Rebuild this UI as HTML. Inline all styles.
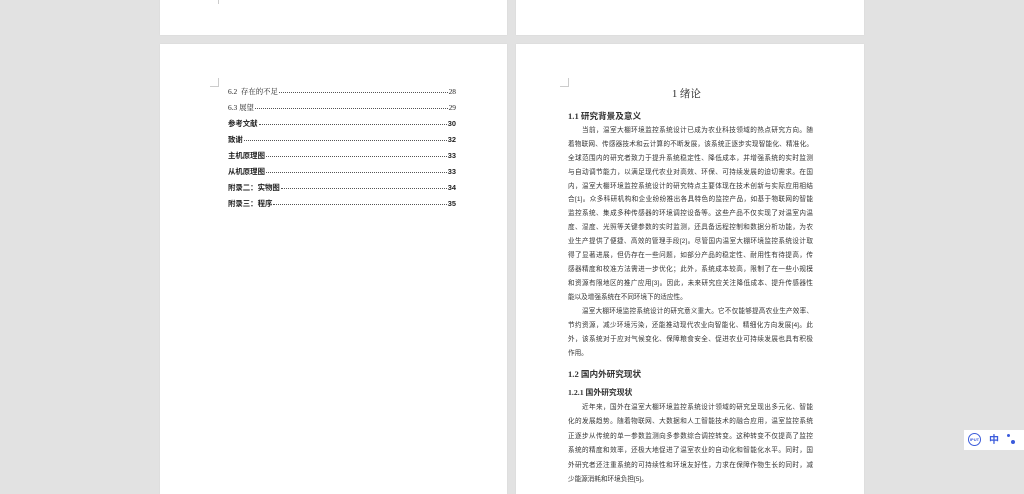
<!DOCTYPE html>
<html><head><meta charset="utf-8"><style>
body{margin:0;width:1024px;height:483px;background:#e2e2e2;position:relative;overflow:hidden;font-family:"Liberation Serif","Noto Serif CJK SC","Noto Sans CJK SC",serif;color:#222}
.pg{position:absolute;background:#fff;box-shadow:0 0 1px #cfcfcf}
.l{position:absolute;white-space:nowrap}
.h{font-family:"Liberation Serif","Noto Sans CJK SC",sans-serif;font-weight:bold;color:#333}
.toc{position:absolute;left:228px;width:228px;font-size:7.4px;display:flex;align-items:baseline}
.toc .d{flex:1;border-bottom:1px dotted #555;margin:0 1px;transform:translateY(-1px)}
.b{font-family:"Liberation Sans","Noto Sans CJK SC",sans-serif;font-weight:bold}
.tx{position:absolute;left:568px;width:245px;font-size:6.6px;text-align:justify;text-align-last:justify;white-space:nowrap;line-height:8px;font-family:"Liberation Sans","Noto Sans CJK SC",sans-serif;color:#333}
.cm{position:absolute;border-color:#ccc;border-style:solid;width:8px;height:8px}
</style></head><body>
<div class="pg" style="left:160px;top:-5px;width:347px;height:40px"></div>
<div class="pg" style="left:516px;top:-5px;width:348px;height:40px"></div>
<div class="pg" style="left:160px;top:44px;width:347px;height:450px"></div>
<div class="pg" style="left:516px;top:44px;width:348px;height:450px"></div>
<div class="cm" style="left:210px;top:78px;border-width:0 1px 1px 0"></div>
<div class="cm" style="left:210px;top:-4px;border-width:0 1px 0 0"></div>
<div class="cm" style="left:560px;top:78px;border-width:0 1px 1px 0"></div>

<div class="toc" style="top:86px"><span>6.2&nbsp; 存在的不足</span><span class="d"></span><span>28</span></div>
<div class="toc" style="top:102px"><span>6.3 展望</span><span class="d"></span><span>29</span></div>
<div class="toc b" style="top:118px"><span>参考文献</span><span class="d"></span><span>30</span></div>
<div class="toc b" style="top:134px"><span>致谢</span><span class="d"></span><span>32</span></div>
<div class="toc b" style="top:150px"><span>主机原理图</span><span class="d"></span><span>33</span></div>
<div class="toc b" style="top:166px"><span>从机原理图</span><span class="d"></span><span>33</span></div>
<div class="toc b" style="top:182px"><span>附录二：实物图</span><span class="d"></span><span>34</span></div>
<div class="toc b" style="top:198px"><span>附录三：程序</span><span class="d"></span><span>35</span></div>

<div class="l" style="left:672px;top:86px;font-size:10.5px">1 绪论</div>
<div class="l h" style="left:568px;top:110px;font-size:8.6px">1.1 研究背景及意义</div>
<div class="tx" style="top:127px;padding-left:14px;width:231px">当前，温室大棚环境监控系统设计已成为农业科技领域的热点研究方向。随</div>
<div class="tx" style="top:141px">着物联网、传感器技术和云计算的不断发展，该系统正逐步实现智能化、精准化。</div>
<div class="tx" style="top:155px">全球范围内的研究者致力于提升系统稳定性、降低成本，并增强系统的实时监测</div>
<div class="tx" style="top:169px">与自动调节能力，以满足现代农业对高效、环保、可持续发展的迫切需求。在国</div>
<div class="tx" style="top:183px">内，温室大棚环境监控系统设计的研究特点主要体现在技术创新与实际应用相结</div>
<div class="tx" style="top:196px">合[1]。众多科研机构和企业纷纷推出各具特色的监控产品，如基于物联网的智能</div>
<div class="tx" style="top:210px">监控系统、集成多种传感器的环境调控设备等。这些产品不仅实现了对温室内温</div>
<div class="tx" style="top:224px">度、湿度、光照等关键参数的实时监测，还具备远程控制和数据分析功能，为农</div>
<div class="tx" style="top:238px">业生产提供了便捷、高效的管理手段[2]。尽管国内温室大棚环境监控系统设计取</div>
<div class="tx" style="top:252px">得了显著进展，但仍存在一些问题，如部分产品的稳定性、耐用性有待提高，传</div>
<div class="tx" style="top:266px">感器精度和校准方法需进一步优化；此外，系统成本较高，限制了在一些小规模</div>
<div class="tx" style="top:280px">和资源有限地区的推广应用[3]。因此，未来研究应关注降低成本、提升传感器性</div>
<div class="tx" style="top:294px;text-align-last:left">能以及增强系统在不同环境下的适应性。</div>
<div class="tx" style="top:308px;padding-left:14px;width:231px">温室大棚环境监控系统设计的研究意义重大。它不仅能够提高农业生产效率、</div>
<div class="tx" style="top:322px">节约资源，减少环境污染，还能推动现代农业向智能化、精细化方向发展[4]。此</div>
<div class="tx" style="top:336px">外，该系统对于应对气候变化、保障粮食安全、促进农业可持续发展也具有积极</div>
<div class="tx" style="top:350px;text-align-last:left">作用。</div>
<div class="l h" style="left:568px;top:368px;font-size:8.6px">1.2 国内外研究现状</div>
<div class="l h" style="left:568px;top:387px;font-size:7.8px">1.2.1 国外研究现状</div>
<div class="tx" style="top:404px;padding-left:14px;width:231px">近年来，国外在温室大棚环境监控系统设计领域的研究呈现出多元化、智能</div>
<div class="tx" style="top:418px">化的发展趋势。随着物联网、大数据和人工智能技术的融合应用，温室监控系统</div>
<div class="tx" style="top:433px">正逐步从传统的单一参数监测向多参数综合调控转变。这种转变不仅提高了监控</div>
<div class="tx" style="top:447px">系统的精度和效率，还极大地促进了温室农业的自动化和智能化水平。同时，国</div>
<div class="tx" style="top:462px">外研究者还注重系统的可持续性和环境友好性，力求在保障作物生长的同时，减</div>
<div class="tx" style="top:476px;text-align-last:left">少能源消耗和环境负担[5]。</div>

<div style="position:absolute;left:964px;top:430px;width:60px;height:20px;background:#fff"></div>
<div style="position:absolute;left:968px;top:433px;width:11px;height:11px;border:1.5px solid #3b5bdb;border-radius:50%;font:bold 4px 'Liberation Sans';color:#3b5bdb;text-align:center;line-height:11px">IPUT</div>
<div style="position:absolute;left:989px;top:431px;font:bold 10px 'Noto Sans CJK SC',sans-serif;color:#3b5bdb">中</div>
<div style="position:absolute;left:1007px;top:434px;width:3px;height:3px;background:#3b5bdb;border-radius:50%"></div>
<div style="position:absolute;left:1011px;top:440px;width:4px;height:4px;background:#3b5bdb;border-radius:50%"></div>
</body></html>
